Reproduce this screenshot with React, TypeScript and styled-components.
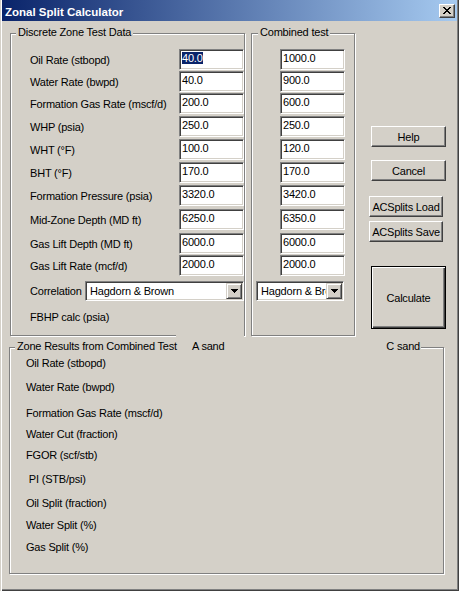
import React from 'react';
import styled, { createGlobalStyle } from 'styled-components';

const Global = createGlobalStyle`
  html, body { margin: 0; padding: 0; background: #d4d0c8; }
  body {
    font-family: "Liberation Sans", Arial, sans-serif;
    font-size: 11px;
    letter-spacing: -0.2px;
    color: #000;
  }
`;

const Window = styled.div`
  width: 459px;
  height: 591px;
  box-sizing: border-box;
  background: #d4d0c8;
  padding: 0 2px 2px 2px;
  box-shadow: inset 1px 0 0 #d4d0c8, inset 2px 0 0 #fff, inset -1px -1px 0 #404040,
    inset -2px -2px 0 #808080;
  display: flex;
  flex-direction: column;
`;

const TitleBar = styled.div`
  height: 21px;
  box-sizing: border-box;
  padding: 3px 2px 0 3px;
  display: flex;
  align-items: center;
  background: linear-gradient(to right, #0a246a, #a6caf0);
`;

const TitleText = styled.div`
  flex: 1;
  color: #fff;
  font-weight: bold;
  font-size: 11.5px;
  letter-spacing: 0;
  line-height: 14px;
`;

const CloseButton = styled.div`
  width: 16px;
  height: 14px;
  box-sizing: border-box;
  background: #d4d0c8;
  border: 1px solid;
  border-color: #fff #404040 #404040 #fff;
  box-shadow: inset -1px -1px 0 #808080;
  display: flex;
  align-items: center;
  justify-content: center;
  margin-top: -3px;
`;

const TopRow = styled.div`
  display: flex;
  align-items: flex-start;
  margin: 12px 0 0 8px;
`;

const Group = styled.div<{ $w: number; $h: number }>`
  position: relative;
  box-sizing: border-box;
  width: ${(p) => p.$w}px;
  height: ${(p) => p.$h}px;
  border: 1px solid #808080;
  box-shadow: inset 1px 1px 0 #fff, 1px 1px 0 #fff;
`;

const DiscreteGroup = styled(Group)`
  padding: 15px 0 0 19px;
  &::after {
    content: '';
    position: absolute;
    left: 165px;
    bottom: -2px;
    width: 68px;
    height: 2px;
    background: #d4d0c8;
  }
`;

const CombinedGroup = styled(Group)`
  margin-left: 6px;
  padding: 15px 0 0 4px;
`;

const ResultsGroup = styled(Group)`
  margin: 11px 0 0 7px;
  padding: 9px 0 0 16px;
`;

const Legend = styled.div<{ $left: number }>`
  position: absolute;
  top: -8px;
  left: ${(p) => p.$left}px;
  background: #d4d0c8;
  padding: 0 2px;
  line-height: 13px;
  white-space: nowrap;
`;

const ResultsLegend = styled(Legend)`
  display: flex;
  width: 406px;
  box-sizing: border-box;
  padding: 0 1px 0 2px;
`;

const LegendMain = styled.span`
  width: 175px;
`;

const LegendRight = styled.span`
  margin-left: auto;
`;

const FieldRow = styled.div<{ $mt: number }>`
  display: grid;
  grid-template-columns: 149px 65px;
  height: 21px;
  margin-top: ${(p) => p.$mt}px;
`;

const RowLabel = styled.div`
  line-height: 13px;
  padding-top: 5px;
  white-space: nowrap;
`;

const Field = styled.div<{ $mt?: number; $ml?: number }>`
  box-sizing: border-box;
  width: 65px;
  height: 21px;
  margin-top: ${(p) => p.$mt ?? 0}px;
  margin-left: ${(p) => p.$ml ?? 0}px;
  background: #fff;
  border: 1px solid;
  border-color: #808080 #fff #fff #808080;
  box-shadow: inset 1px 1px 0 #404040, inset -1px -1px 0 #d4d0c8;
  padding: 1px 0 0 2px;
  line-height: 14px;
  white-space: nowrap;
  overflow: hidden;
`;

const Selected = styled.span`
  background: #0a246a;
  color: #fff;
`;

const ComboRow = styled.div`
  display: flex;
  align-items: center;
  margin-top: 5px;
`;

const ComboLabel = styled.div`
  width: 55px;
  line-height: 13px;
  white-space: nowrap;
`;

const Combo = styled.div<{ $w: number }>`
  box-sizing: border-box;
  width: ${(p) => p.$w}px;
  height: 20px;
  background: #fff;
  border: 1px solid;
  border-color: #808080 #fff #fff #808080;
  box-shadow: inset 1px 1px 0 #404040, inset -1px -1px 0 #d4d0c8;
  padding: 1px 1px 1px 1px;
  display: flex;
`;

const ComboText = styled.div`
  flex: 1;
  min-width: 0;
  overflow: hidden;
  white-space: nowrap;
  line-height: 16px;
  padding-left: 3px;
`;

const ComboButton = styled.div`
  width: 16px;
  height: 16px;
  flex: none;
  box-sizing: border-box;
  background: #d4d0c8;
  border: 1px solid;
  border-color: #d4d0c8 #404040 #404040 #d4d0c8;
  box-shadow: inset 1px 1px 0 #fff, inset -1px -1px 0 #808080;
  display: flex;
  align-items: center;
  justify-content: center;
`;

const PlainLabel = styled.div<{ $mt: number }>`
  margin-top: ${(p) => p.$mt}px;
  height: 13px;
  line-height: 13px;
  white-space: pre;
`;

const ButtonColumn = styled.div`
  display: flex;
  flex-direction: column;
  align-items: flex-start;
  margin: 93px 0 0 16px;
`;

const Button = styled.div<{ $w: number; $h: number; $mt: number; $ml?: number }>`
  box-sizing: border-box;
  width: ${(p) => p.$w}px;
  height: ${(p) => p.$h}px;
  margin-top: ${(p) => p.$mt}px;
  margin-left: ${(p) => p.$ml ?? 0}px;
  background: #d4d0c8;
  border: 1px solid;
  border-color: #fff #404040 #404040 #fff;
  box-shadow: inset -1px -1px 0 #808080, inset 1px 1px 0 #d4d0c8;
  display: flex;
  align-items: center;
  justify-content: center;
  white-space: nowrap;
`;

const DefaultButton = styled(Button)`
  border: 1px solid #000;
  box-shadow: inset 1px 1px 0 #fff, inset -1px -1px 0 #404040, inset -2px -2px 0 #808080;
`;

const Arrow = () => (
  <svg width="7" height="4" viewBox="0 0 7 4" shapeRendering="crispEdges">
    <path d="M0 0h7v1H0zM1 1h5v1H1zM2 2h3v1H2zM3 3h1v1H3z" fill="#000" />
  </svg>
);

const CloseGlyph = () => (
  <svg width="8" height="7" viewBox="0 0 8 7" shapeRendering="crispEdges">
    <path
      d="M0 0h2v1H0zM6 0h2v1H6zM1 1h2v1H1zM5 1h2v1H5zM2 2h4v1H2zM3 3h2v1H3zM2 4h4v1H2zM1 5h2v1H1zM5 5h2v1H5zM0 6h2v1H0zM6 6h2v1H6z"
      fill="#000"
    />
  </svg>
);

type Row = { label: string; a: string; b: string; mt: number; selected?: boolean };

const rows: Row[] = [
  { label: 'Oil Rate (stbopd)', a: '40.0', b: '1000.0', mt: 0, selected: true },
  { label: 'Water Rate (bwpd)', a: '40.0', b: '900.0', mt: 1 },
  { label: 'Formation Gas Rate (mscf/d)', a: '200.0', b: '600.0', mt: 1 },
  { label: 'WHP (psia)', a: '250.0', b: '250.0', mt: 2 },
  { label: 'WHT (°F)', a: '100.0', b: '120.0', mt: 2 },
  { label: 'BHT (°F)', a: '170.0', b: '170.0', mt: 2 },
  { label: 'Formation Pressure (psia)', a: '3320.0', b: '3420.0', mt: 2 },
  { label: 'Mid-Zone Depth (MD ft)', a: '6250.0', b: '6350.0', mt: 3 },
  { label: 'Gas Lift Depth (MD ft)', a: '6000.0', b: '6000.0', mt: 3 },
  { label: 'Gas Lift Rate (mcf/d)', a: '2000.0', b: '2000.0', mt: 1 },
];

const results = [
  { label: 'Oil Rate (stbopd)', mt: 0 },
  { label: 'Water Rate (bwpd)', mt: 11 },
  { label: 'Formation Gas Rate (mscf/d)', mt: 13 },
  { label: 'Water Cut (fraction)', mt: 8 },
  { label: 'FGOR (scf/stb)', mt: 8 },
  { label: ' PI (STB/psi)', mt: 11 },
  { label: 'Oil Split (fraction)', mt: 11 },
  { label: 'Water Split (%)', mt: 9 },
  { label: 'Gas Split (%)', mt: 9 },
];

export default function App() {
  return (
    <>
      <Global />
      <Window>
        <TitleBar>
          <TitleText>Zonal Split Calculator</TitleText>
          <CloseButton>
            <CloseGlyph />
          </CloseButton>
        </TitleBar>

        <TopRow>
          <DiscreteGroup $w={235} $h={303}>
            <Legend $left={5}>Discrete Zone Test Data</Legend>
            {rows.map((r) => (
              <FieldRow key={r.label} $mt={r.mt}>
                <RowLabel>{r.label}</RowLabel>
                <Field>{r.selected ? <Selected>{r.a}</Selected> : r.a}</Field>
              </FieldRow>
            ))}
            <ComboRow>
              <ComboLabel>Correlation</ComboLabel>
              <Combo $w={159}>
                <ComboText>Hagdorn &amp; Brown</ComboText>
                <ComboButton>
                  <Arrow />
                </ComboButton>
              </Combo>
            </ComboRow>
            <PlainLabel $mt={10}>FBHP calc (psia)</PlainLabel>
          </DiscreteGroup>

          <CombinedGroup $w={104} $h={303}>
            <Legend $left={6}>Combined test</Legend>
            {rows.map((r) => (
              <Field key={r.label} $mt={r.mt} $ml={24}>
                {r.b}
              </Field>
            ))}
            <ComboRow>
              <Combo $w={88}>
                <ComboText>Hagdorn &amp; Brown</ComboText>
                <ComboButton>
                  <Arrow />
                </ComboButton>
              </Combo>
            </ComboRow>
          </CombinedGroup>

          <ButtonColumn>
            <Button $w={75} $h={21} $mt={0}>Help</Button>
            <Button $w={75} $h={21} $mt={13}>Cancel</Button>
            <Button $w={74} $h={21} $mt={15} $ml={-2}>ACSplits Load</Button>
            <Button $w={74} $h={21} $mt={4} $ml={-2}>ACSplits Save</Button>
            <DefaultButton $w={75} $h={63} $mt={24}>Calculate</DefaultButton>
          </ButtonColumn>
        </TopRow>

        <ResultsGroup $w={435} $h={227}>
          <ResultsLegend $left={5}>
            <LegendMain>Zone Results from Combined Test</LegendMain>
            <span>A sand</span>
            <LegendRight>C sand</LegendRight>
          </ResultsLegend>
          {results.map((r) => (
            <PlainLabel key={r.label} $mt={r.mt}>
              {r.label}
            </PlainLabel>
          ))}
        </ResultsGroup>
      </Window>
    </>
  );
}
